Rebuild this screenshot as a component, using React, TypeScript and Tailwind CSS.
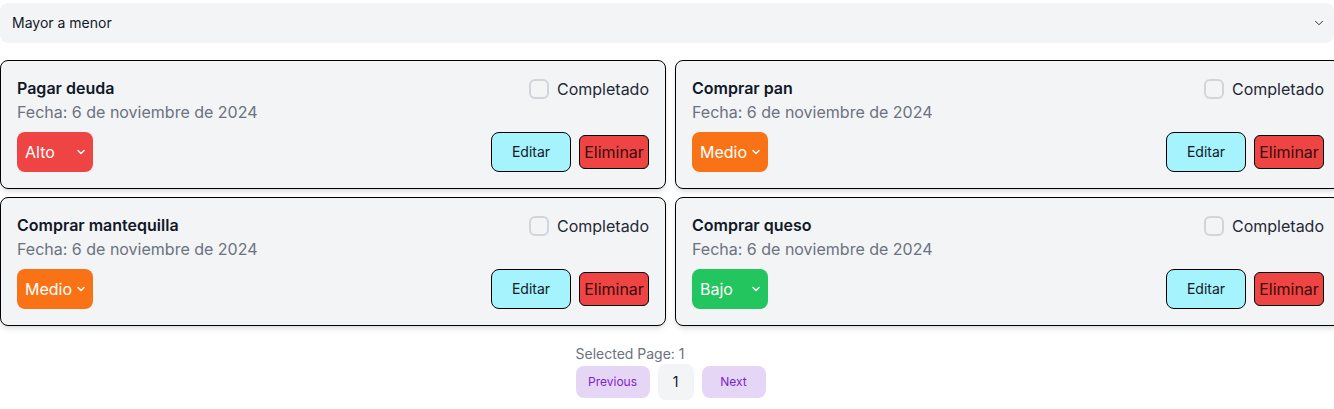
const tasks = [
  { title: "Pagar deuda", prio: "Alto", color: "bg-[#ef4444]" },
  { title: "Comprar pan", prio: "Medio", color: "bg-[#f97316]" },
  { title: "Comprar mantequilla", prio: "Medio", color: "bg-[#f97316]" },
  { title: "Comprar queso", prio: "Bajo", color: "bg-[#22c55e]" },
]

function Chevron({ className }: { className?: string }) {
  return (
    <svg viewBox="0 0 24 24" className={className} fill="none" stroke="currentColor" strokeLinecap="round" strokeLinejoin="round">
      <path d="M6 9l6 6 6-6" />
    </svg>
  )
}

function TaskCard({ title, prio, color }: { title: string; prio: string; color: string }) {
  return (
    <div className="bg-[#f3f4f6] border border-black rounded-lg shadow-md px-4 pt-[15px] pb-4">
      <div className="flex items-start justify-between">
        <div>
          <h3 className="text-base font-semibold text-[#111827] leading-6">{title}</h3>
          <p className="text-base text-[#6b7280] leading-6">Fecha: 6 de noviembre de 2024</p>
        </div>
        <label className="flex items-center gap-2 leading-6 mt-px">
          <span className="w-5 h-5 rounded-md border-2 border-[#d1d5db] bg-[#f3f4f6]" />
          <span className="text-base text-[#1f2937]">Completado</span>
        </label>
      </div>
      <div className="flex items-center justify-between mt-2">
        <div className={`${color} w-[76px] h-10 rounded-lg flex items-center justify-between pl-2 pr-1.5 text-white text-base`}>
          <span>{prio}</span>
          <Chevron className="w-3 h-3 stroke-[3]" />
        </div>
        <div className="flex items-center gap-2">
          <button className="w-20 h-10 bg-[#a5f3fc] border border-black rounded-lg text-sm text-[#111827]">Editar</button>
          <button className="w-[70px] h-[34px] bg-[#ef4444] border border-black rounded-md text-base text-[#3b0a0a]">Eliminar</button>
        </div>
      </div>
    </div>
  )
}

export default function App() {
  return (
    <div className="w-[1334px] h-[409px] overflow-hidden bg-white" style={{ fontFamily: "Inter, 'Noto Sans', sans-serif" }}>
      <div className="w-[1341px]">
        <div className="mt-[3px] h-10 bg-[#f3f4f6] rounded-lg flex items-center justify-between pl-3 pr-2 text-sm text-[#111827] w-[1334px]">
          <span>Mayor a menor</span>
          <Chevron className="w-3.5 h-3.5 stroke-[1.5]" />
        </div>
        <div className="grid grid-cols-[666px_666px] gap-x-[9px] gap-y-2 mt-[17px]">
          {tasks.map((t) => (
            <TaskCard key={t.title} {...t} />
          ))}
        </div>
        <div className="flex justify-center mt-[18px]">
          <div>
            <p className="text-sm text-[#6b7280] leading-5">Selected Page: 1</p>
            <div className="flex items-center gap-2">
              <button className="w-[74px] h-8 rounded-lg bg-[#e6d6f5] text-xs text-[#7e22ce]">Previous</button>
              <button className="w-9 h-9 rounded-lg bg-[#f3f4f6] text-sm text-[#111827]">1</button>
              <button className="w-16 h-8 rounded-lg bg-[#e6d6f5] text-xs text-[#7e22ce]">Next</button>
            </div>
          </div>
        </div>
      </div>
    </div>
  )
}
